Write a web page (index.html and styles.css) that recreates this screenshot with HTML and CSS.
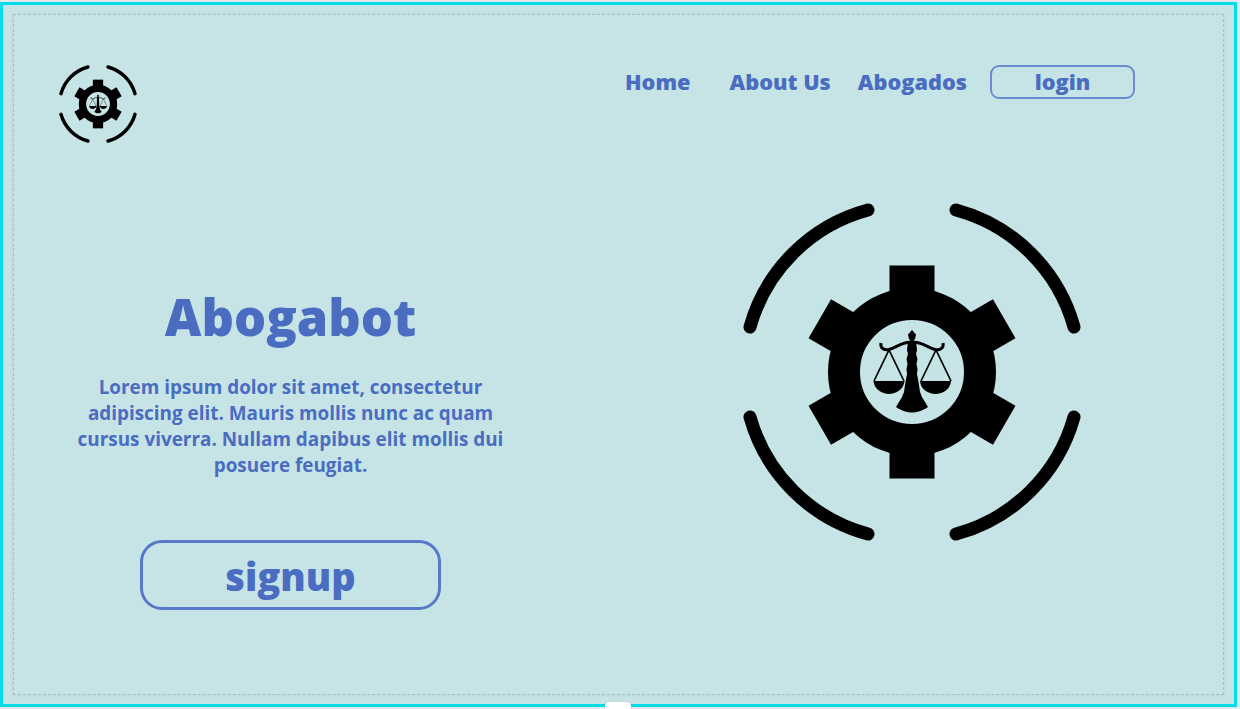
FILE: index.html
```html
<!DOCTYPE html>
<html lang="en">
<head>
    <meta charset="UTF-8">
    <meta name="viewport" content="width=device-width, initial-scale=1.0">
    <title>Abogabot</title>
    <link rel="stylesheet" href="styles.css">
</head>
<body>
    <svg class="sprite" aria-hidden="true">
        <symbol id="logo" viewBox="-175 -175 350 350">
            <g fill="none" stroke="#000" stroke-linecap="round">
                <path d="M44 -162A168 168 0 0 1 162 -45"/>
                <path d="M162 45A168 168 0 0 1 44 162"/>
                <path d="M-44 162A168 168 0 0 1 -162 45"/>
                <path d="M-162 -45A168 168 0 0 1 -44 -162"/>
            </g>
            <circle r="68" fill="none" stroke="#000" stroke-width="32"/>
            <g>
                <rect x="-22.5" y="-106.5" width="45" height="36"/>
                <rect x="-22.5" y="-106.5" width="45" height="36" transform="rotate(60)"/>
                <rect x="-22.5" y="-106.5" width="45" height="36" transform="rotate(120)"/>
                <rect x="-22.5" y="-106.5" width="45" height="36" transform="rotate(180)"/>
                <rect x="-22.5" y="-106.5" width="45" height="36" transform="rotate(240)"/>
                <rect x="-22.5" y="-106.5" width="45" height="36" transform="rotate(300)"/>
            </g>
            <!-- scales -->
            <path d="M0 -42L4 -37.500L3 -33L0 -30L-3 -33L-4 -37.500Z"/>
            <path d="M-31 -29C-32 -24 -28 -21.500 -23 -22.500C-15 -25 -10 -30 0 -30C10 -30 15 -25 23 -22.500C28 -21.500 32 -24 31 -29" fill="none" stroke="#000" stroke-width="3"/>
            <path d="M-4 -31H4L5 -22L4 -18L5.500 -13L4.500 -8L5.500 -3L5 2L6.500 10L8 20L10 25L16 35C10 39 5 40.500 0 40.500C-5 40.500 -10 39 -16 35L-10 25L-8 20L-6.500 10L-5 2L-5.500 -3L-4.500 -8L-5.500 -13L-4 -18L-5 -22Z"/>
            <path d="M-38 9L-23 -22L-8 9M9 9L24 -22L39 9" fill="none" stroke="#000" stroke-width="1.700"/>
            <path d="M-38.500 9H-7.500C-8 17 -16 22 -23 22C-30 22 -38 17 -38.500 9Z"/>
            <path d="M8 9H39C38.500 17 31 22 23.500 22C16 22 8.500 17 8 9Z"/>
        </symbol>
    </svg>

    <div class="frame">
        <div class="canvas">
            <header class="topbar">
                <svg class="logo-small"><use href="#logo"/></svg>
                <nav class="nav">
                    <a class="nav-link nav-home" href="#">Home</a>
                    <a class="nav-link nav-about" href="#">About Us</a>
                    <a class="nav-link nav-abogados" href="#">Abogados</a>
                    <a class="nav-link login" href="#">login</a>
                </nav>
            </header>
            <main class="hero">
                <section class="hero-text">
                    <h1>Abogabot</h1>
                    <p>Lorem ipsum dolor sit amet, consectetur adipiscing elit. Mauris mollis nunc ac quam cursus viverra. Nullam dapibus elit mollis dui posuere feugiat.</p>
                    <a class="signup" href="#">signup</a>
                </section>
                <svg class="logo-big"><use href="#logo"/></svg>
            </main>
        </div>
        <div class="tab"></div>
    </div>
</body>
</html>
```

FILE: styles.css
```css
html, body {
    height: 100%;
}

body {
    margin: 0;
    overflow: hidden;
    background-color: #e3e8ec;
    font-family: "Open Sans", sans-serif;
    color: #4a6cc1;
}

a {
    color: inherit;
    text-decoration: none;
}

.sprite {
    display: none;
}

.frame {
    position: relative;
    box-sizing: border-box;
    width: 1237px;
    height: 705px;
    margin-top: 2px;
    padding: 9px 10px 9px 10px;
    background-color: #c6e4e6;
    border: 3px solid #00dde8;
}

.canvas {
    box-sizing: border-box;
    height: 100%;
    border: 1px dashed #aebfc2;
    box-shadow: 0 0 3px rgba(120, 150, 155, 0.25);
}

.topbar {
    display: flex;
    align-items: flex-start;
    padding: 49px 0 0 44px;
}

.logo-small {
    width: 80px;
    height: 80px;
    flex: none;
    stroke-width: 15;
}

.nav {
    display: flex;
    align-items: center;
    height: 34px;
    margin-left: 487px;
    font-size: 21.700px;
    font-weight: 800;
    white-space: nowrap;
}

.nav-about {
    margin-left: 39px;
}

.nav-abogados {
    margin-left: 27px;
}

.login {
    box-sizing: border-box;
    width: 145px;
    height: 34px;
    margin-left: 23px;
    margin-top: 2px;
    border: 2px solid #6d8bd2;
    border-radius: 9px;
    line-height: 29px;
    text-align: center;
}

.hero {
    display: flex;
    align-items: flex-start;
}

.hero-text {
    box-sizing: border-box;
    width: 553px;
    padding: 0 60px;
    margin-top: 138px;
    text-align: center;
}

.hero-text h1 {
    margin: 0;
    font-size: 50.500px;
    font-weight: 800;
    line-height: 70px;
}

.hero-text p {
    margin: 22px 0 0;
    font-size: 18.900px;
    font-weight: 700;
    line-height: 26px;
}

.signup {
    display: block;
    box-sizing: border-box;
    width: 301px;
    height: 70px;
    margin: 62px auto 0;
    border: 3px solid #5a78c9;
    border-radius: 22px;
    font-size: 38px;
    font-weight: 800;
    line-height: 66px;
}

.logo-big {
    width: 350px;
    height: 350px;
    flex: none;
    margin-left: 170px;
    margin-top: 53px;
    stroke-width: 13;
}

.tab {
    position: absolute;
    left: 602px;
    bottom: -5px;
    width: 26px;
    height: 7px;
    background-color: #fff;
    border-radius: 4px 4px 0 0;
    box-shadow: 0 0 1px #8a9a9c;
}
```
